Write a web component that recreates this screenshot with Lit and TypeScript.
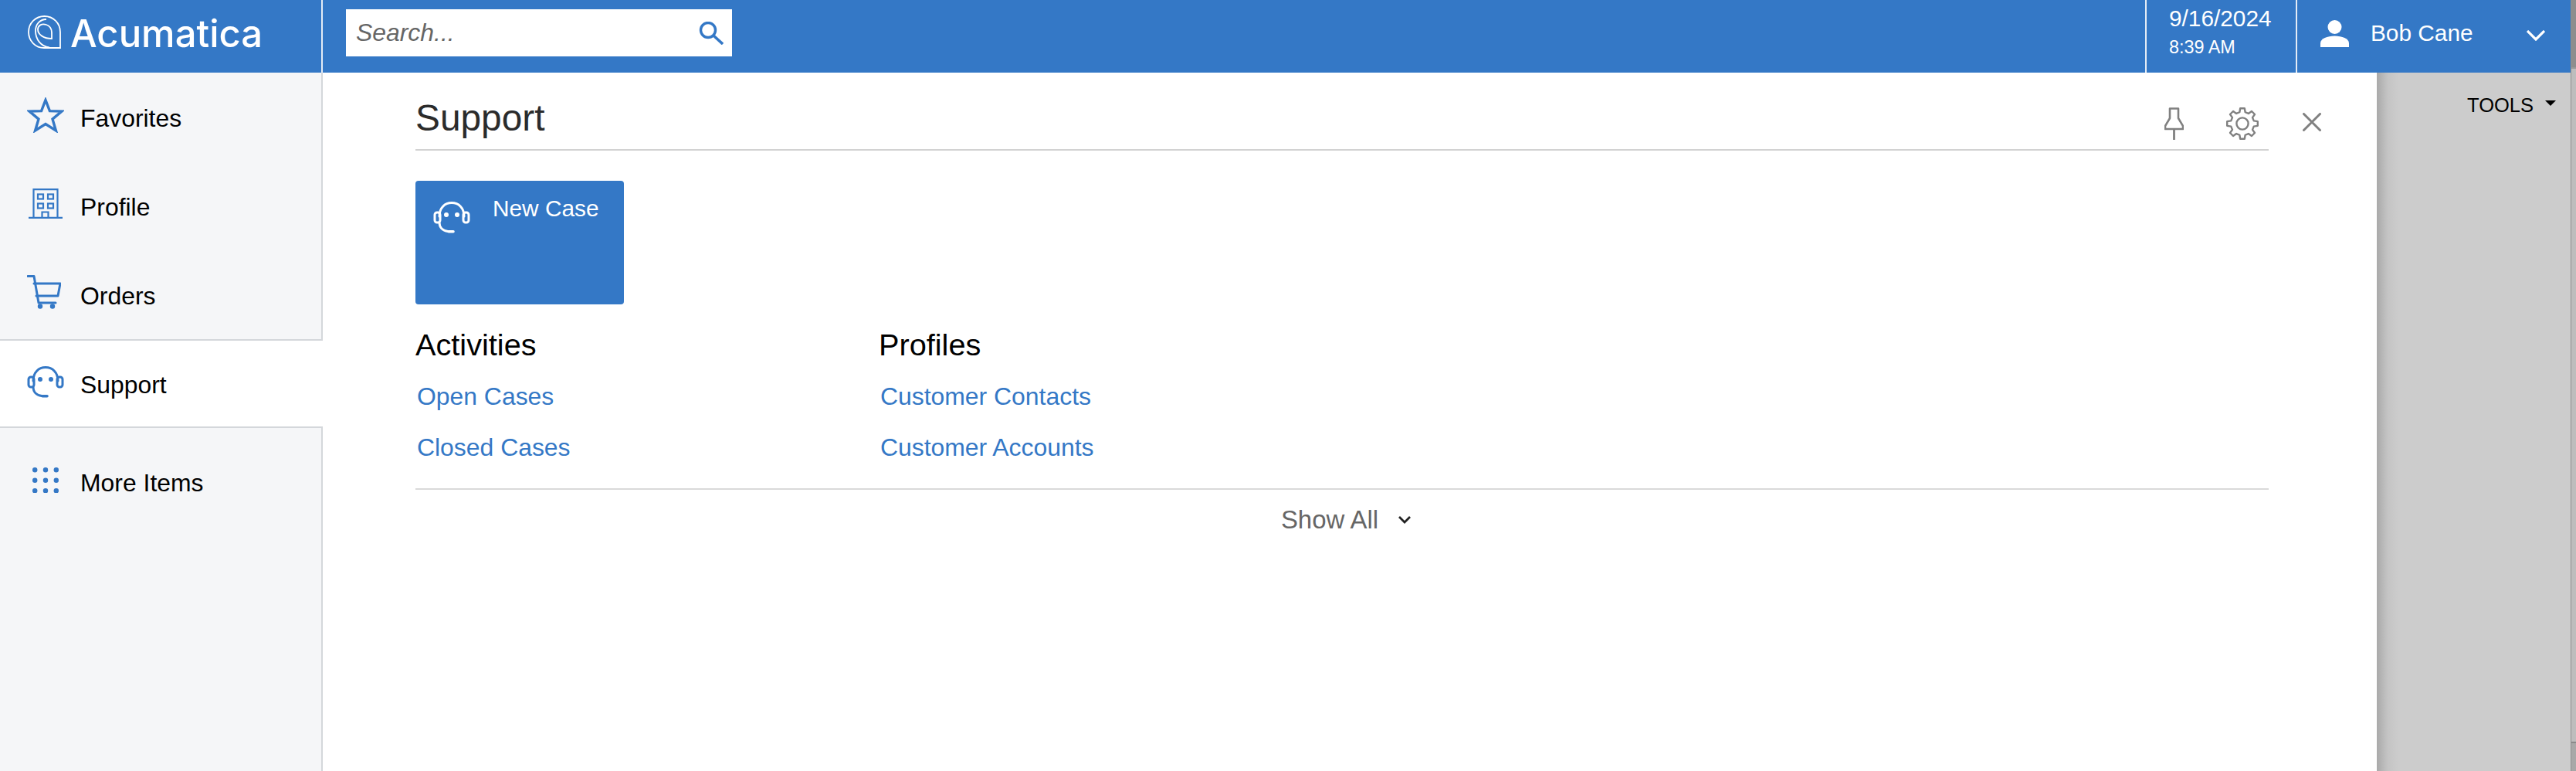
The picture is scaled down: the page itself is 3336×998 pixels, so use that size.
import { LitElement, html, css, svg } from "lit";
import { customElement } from "lit/decorators.js";

const gearPath = () => {
  const pts: string[] = [];
  const teeth = 8;
  const R = 20, r = 15.2, c = 21;
  for (let i = 0; i < teeth; i++) {
    const a = (i * Math.PI * 2) / teeth - Math.PI / 2;
    const s = Math.PI / teeth;
    const list: [number, number][] = [
      [r, a - s * 0.62],
      [R, a - s * 0.36],
      [R, a + s * 0.36],
      [r, a + s * 0.62],
    ];
    for (const [rad, ang] of list) {
      pts.push(`${(c + rad * Math.cos(ang)).toFixed(2)} ${(c + rad * Math.sin(ang)).toFixed(2)}`);
    }
  }
  return "M" + pts.join(" L") + " Z";
};

const headset = (c: string) => svg`<svg class="ico" viewBox="0 0 48 42" width="48" height="42" fill="none" stroke="${c}" stroke-width="3" stroke-linecap="round">
  <path d="M8 19 C8 8 15 1.6 24 1.6 C33 1.6 40 8 40 19"/>
  <rect x="2" y="14" width="7" height="13" rx="3"/>
  <rect x="39" y="14" width="7" height="13" rx="3"/>
  <path d="M8 27 C8 33 12 37.5 19 38.5"/>
  <path d="M20 38.8 H26" stroke-width="3.6"/>
  <circle cx="17" cy="17" r="3" fill="${c}" stroke="none"/>
  <circle cx="31" cy="17" r="3" fill="${c}" stroke="none"/>
</svg>`;

const ICONS: Record<string, unknown> = {
  star: svg`<svg viewBox="0 0 48 46" width="48" height="46" fill="none" stroke="#3478c6" stroke-width="3.4" stroke-linejoin="miter">
    <path d="M24 3.5 L29.4 17.6 L45 18 L33 28.2 L37.4 43 L24 34.6 L10.6 43 L15 28.2 L3 18 L18.6 17.6 Z"/></svg>`,
  building: svg`<svg viewBox="0 0 44 39" width="44" height="39" fill="none" stroke="#3478c6" stroke-width="2.2">
    <path d="M6.5 38 V1.2 H37.5 V38"/><path d="M0 38 H44" stroke-width="2.6"/>
    <rect x="12" y="7.5" width="7" height="6"/><rect x="25" y="7.5" width="7" height="6"/>
    <rect x="12" y="19.5" width="7" height="6"/><rect x="25" y="19.5" width="7" height="6"/>
    <path d="M17.5 38 V30.5 H25.5 V38"/></svg>`,
  cart: svg`<svg viewBox="0 0 44 44" width="44" height="44" fill="none" stroke="#3478c6" stroke-width="3" stroke-linejoin="round" stroke-linecap="round">
    <path d="M1 1.5 H9 L15 36 H37"/><path d="M9 11 H43 L40 27 H12"/>
    <circle cx="17" cy="40.5" r="3.2" fill="#3478c6" stroke="none"/><circle cx="33" cy="40.5" r="3.2" fill="#3478c6" stroke="none"/></svg>`,
  headset: headset("#3478c6"),
  dots: svg`<svg viewBox="0 0 34 33" width="34" height="33" fill="#3478c6">
    ${[3.2, 16.7, 30.3].flatMap((y) => [3.2, 17, 30.8].map((x) => svg`<circle cx="${x}" cy="${y}" r="3.2"/>`))}</svg>`,
};

const NAV = [
  { id: "star", label: "Favorites", cls: "" },
  { id: "building", label: "Profile", cls: "" },
  { id: "cart", label: "Orders", cls: "" },
  { id: "headset", label: "Support", cls: "active" },
  { id: "dots", label: "More Items", cls: "more" },
];

@customElement("app-root")
export class AppRoot extends LitElement {
  static styles = css`
    :host { display: block; height: 998px; overflow: hidden; font-family: "Liberation Sans", Arial, sans-serif; background: #fff; }
    .page { display: flex; height: 998px; }
    .main { width: 3329px; flex: none; display: flex; flex-direction: column; }
    .top { display: flex; height: 94px; background: #3478c6; color: #fff; }
    .brand { box-sizing: border-box; display: flex; align-items: flex-start; gap: 12px; padding: 20px 0 0 36px; border-right: 2px solid #e4ecf6; width: 418px; }
    .word { font-family: Inter, sans-serif; font-size: 49px; font-weight: 500; line-height: 46px; margin-top: 1px; letter-spacing: 0; }
    .searchwrap { flex: 1; padding: 12px 0 0 30px; }
    .search { width: 500px; height: 61px; box-sizing: border-box; background: #fff; display: flex; align-items: center; justify-content: space-between; padding: 0 11px 0 13px; }
    .search span { font-style: italic; font-size: 31.9px; color: #666; }
    .date { width: 195px; box-sizing: border-box; border-left: 2px solid #e4ecf6; padding: 3px 0 0 29px; }
    .d1 { font-size: 29.8px; line-height: 42px; }
    .d2 { font-size: 23.4px; line-height: 30px; margin-top: 1px; }
    .user { flex: 0 0 356px; box-sizing: border-box; border-left: 2px solid #e4ecf6; display: flex; padding: 26px 0 0 30px; }
    .user .name { font-size: 29.8px; line-height: 34px; margin-left: 28px; width: 202px; }
    .chev { margin-top: 13px; }

    .body { display: flex; flex: 1; }
    .side { width: 418px; box-sizing: border-box; background: #f5f6f8; border-right: 2px solid #d4d7db; display: flex; flex-direction: column; }
    .item { height: 115px; flex: none; box-sizing: border-box; display: flex; align-items: flex-start; font-size: 31.9px; line-height: 36px; color: #000; }
    .item .slot { width: 104px; display: block; padding-left: 35px; box-sizing: border-box; }
    .item .slot svg { display: block; }
    .item .label { margin-top: 41px; }
    .item.star .slot { padding-top: 32px; }
    .item.building .slot { padding: 35px 0 0 37px; }
    .item.cart .slot { padding-top: 32px; }
    .item.headset .slot { padding-top: 33px; }
    .item.dots .slot { padding: 51px 0 0 42px; }
    .item.active { background: #fff; margin-right: -2px; border-top: 2px solid #d4d7db; border-bottom: 2px solid #d4d7db; position: relative; z-index: 2; }
    .item.active .label { margin-top: 39px; }
    .item.more .label { margin-top: 53px; }

    .panel { width: 2660px; flex: none; box-sizing: border-box; background: #fff; padding: 0 140px 0 120px; }
    .head { height: 99px; border-bottom: 2px solid #d2d2d2; display: flex; align-items: flex-start; }
    .title { font-size: 47.8px; line-height: 54px; color: #2b2b2b; padding-top: 32px; }
    .tools { margin-left: auto; display: flex; align-items: flex-start; padding-top: 45px; margin-right: -68px; }
    .tools .pin { margin-right: 55px; }
    .tools .gear { margin-right: 57px; }
    .tools .x { margin-top: 7px; }
    .card { margin-top: 39px; width: 270px; height: 160px; background: #3478c6; border-radius: 4px; color: #fff; display: flex; align-items: flex-start; box-sizing: border-box; padding: 20px 0 0 23px; font-size: 29.8px; }
    .card .ico { margin-top: 7px; flex: none; }
    .card .txt { margin-left: 29px; margin-top: -1px; line-height: 34px; }
    .cols { display: flex; margin-top: 29px; height: 209px; border-bottom: 2px solid #d9d9d9; }
    .col { width: 600px; }
    .col h3 { margin: 0; font-weight: 400; font-size: 39.7px; line-height: 46px; color: #000; }
    .col a { display: block; margin-left: 2px; font-size: 31.9px; line-height: 36px; color: #3478c6; text-decoration: none; margin-top: 30px; }
    .col h3 + a { margin-top: 26px; }
    .show { display: flex; justify-content: center; align-items: center; font-size: 32.9px; line-height: 38px; color: #666; margin-top: 20px; padding-left: 10px; }
    .show svg { margin-left: 26px; }

    .shade { flex: 1; background: #ccc; position: relative; }
    .shade::before { content: ""; position: absolute; left: 0; top: 0; bottom: 0; width: 28px; background: linear-gradient(90deg, #a9a9a9, #c4c4c4 50%, #ccc); }
    .toolsbtn { position: absolute; right: 19px; top: 27px; font-size: 25.5px; line-height: 30px; color: #000; display: flex; align-items: center; gap: 15px; }
    .caret { width: 0; height: 0; border-left: 7px solid transparent; border-right: 7px solid transparent; border-top: 7px solid #000; margin-top: -6px; }
    .strip { flex: 1; border-left: 1px solid #8f8f8f; display: flex; flex-direction: column; }
    .strip-top { height: 87px; background: #8e8e8e; }
    .strip-mid { height: 873px; background: #bdbdbd; border-top: 2px solid #9a9a9a; box-sizing: border-box; }
    .strip-low { flex: 1; background: #a8a8a8; border-top: 2px solid #8a8a8a; }
  `;

  render() {
    return html`
      <div class="page">
      <div class="main">
      <div class="top">
        <div class="brand">
          <svg width="43" height="43" viewBox="0 0 43 43" fill="none" stroke="#fff" stroke-width="1.8">
            <path d="M42 42 H21 C10 42 1 33 1 21.5 C1 10 10 1 21.5 1 C33 1 42 10 42 21.5 Z"/>
            <path d="M28 41.5 C17 40 10 31 10 20 C10 11 16 5 24 5"/>
            <path d="M31 30 C21 30 13 25 13 18 C13 13 18 10 24 12 C28 13 31 17 31 22 Z"/>
          </svg>
          <span class="word">Acumatica</span>
        </div>
        <div class="searchwrap">
          <div class="search">
            <span>Search...</span>
            <svg width="32" height="30" viewBox="0 0 32 30" fill="none" stroke="#3478c6" stroke-width="3.4">
              <circle cx="12" cy="11" r="9.5"/><path d="M19 18 L31 29" stroke-width="3.6"/>
            </svg>
          </div>
        </div>
        <div class="date"><div class="d1">9/16/2024</div><div class="d2">8:39 AM</div></div>
        <div class="user">
          <svg width="37" height="35" viewBox="0 0 37 35" fill="#fff">
            <ellipse cx="18.5" cy="9" rx="9" ry="9"/>
            <path d="M0 35 V30 C0 24 9 20.5 18.5 20.5 C28 20.5 37 24 37 30 V35 Z"/>
          </svg>
          <span class="name">Bob Cane</span>
          <svg class="chev" width="24" height="14" viewBox="0 0 24 14" fill="none" stroke="#fff" stroke-width="3.2"><path d="M1 1 L12 12 L23 1"/></svg>
        </div>
      </div>
      <div class="body">
        <nav class="side">
          ${NAV.map((n) => html`<div class="item ${n.id} ${n.cls}"><span class="slot">${ICONS[n.id]}</span><span class="label">${n.label}</span></div>`)}
        </nav>
        <section class="panel">
          <div class="head">
            <div class="title">Support</div>
            <div class="tools">
              <svg class="pin" width="25" height="42" viewBox="0 0 25 42" fill="none" stroke="#808080" stroke-width="2.6">
                <path d="M7 1.5 H18 V14 L24 24 V28 H1 V24 L7 14 Z" stroke-linejoin="round"/><path d="M12.5 28 V42" stroke-width="2.8"/>
              </svg>
              <svg class="gear" width="42" height="42" viewBox="0 0 42 42" fill="none" stroke="#808080" stroke-width="2.4" stroke-linejoin="round">
                <circle cx="21" cy="21" r="7.6"/>
                <path d="${gearPath()}"/>
              </svg>
              <svg class="x" width="24" height="24" viewBox="0 0 24 24" fill="none" stroke="#808080" stroke-width="3" stroke-linecap="round"><path d="M1.5 1.5 L22.5 22.5 M22.5 1.5 L1.5 22.5"/></svg>
            </div>
          </div>
          <div class="card">${headset("#fff")}<span class="txt">New Case</span></div>
          <div class="cols">
            <div class="col"><h3>Activities</h3><a>Open Cases</a><a>Closed Cases</a></div>
            <div class="col"><h3>Profiles</h3><a>Customer Contacts</a><a>Customer Accounts</a></div>
          </div>
          <div class="show"><span>Show All</span><svg width="16" height="10" viewBox="0 0 16 10" fill="none" stroke="#222" stroke-width="2.8"><path d="M1 1 L8 8 L15 1"/></svg></div>
        </section>
        <div class="shade"><div class="toolsbtn"><span>TOOLS</span><i class="caret"></i></div></div>
      </div>
      </div>
      <div class="strip"><div class="strip-top"></div><div class="strip-mid"></div><div class="strip-low"></div></div>
      </div>
    `;
  }
}
